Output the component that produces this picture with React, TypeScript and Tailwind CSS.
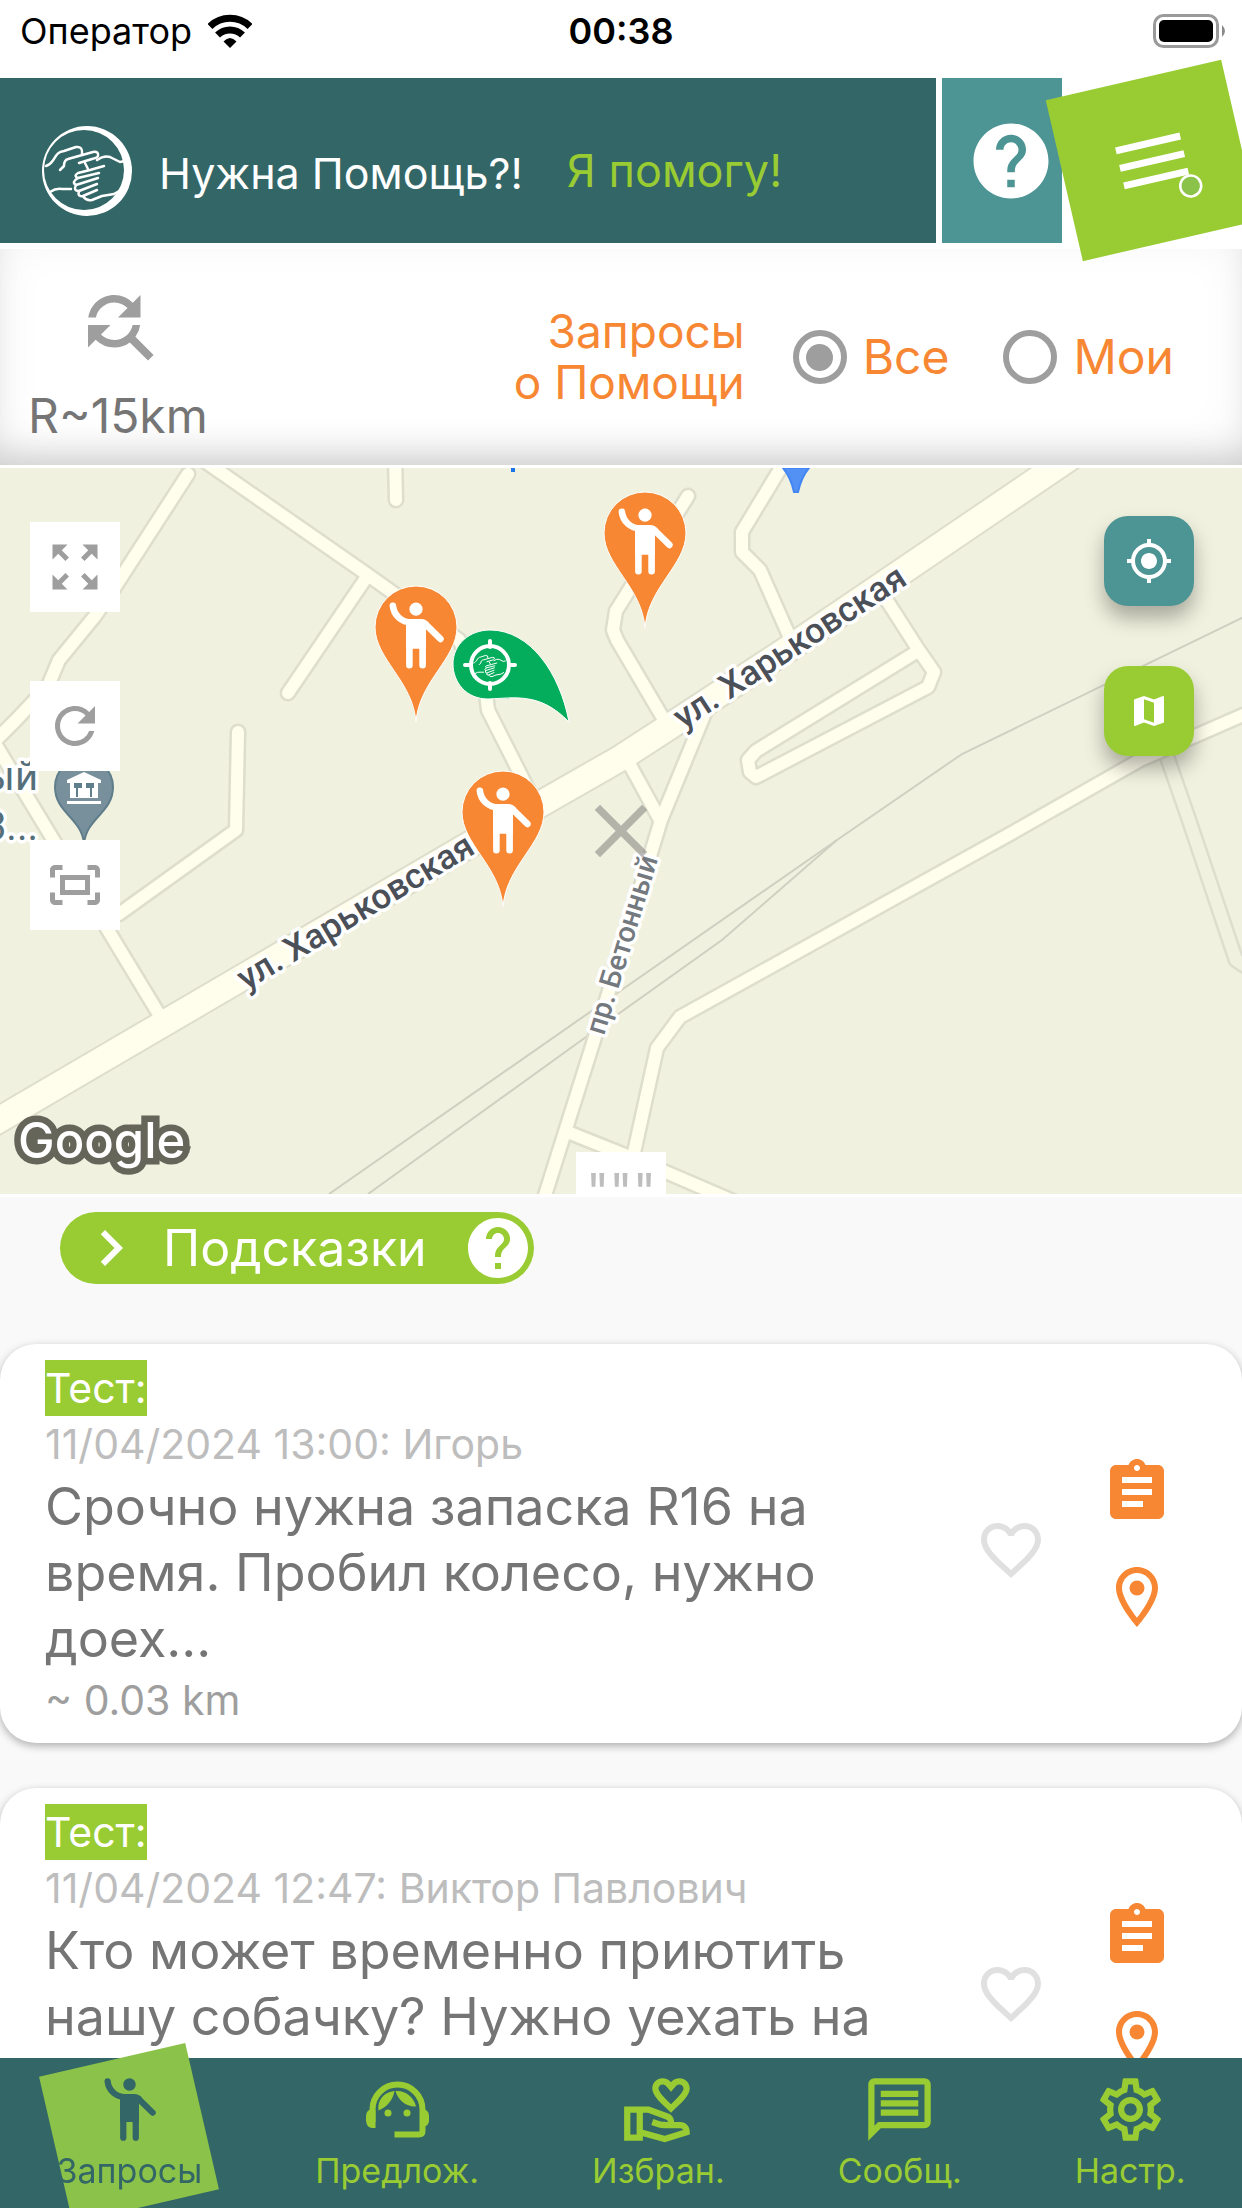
import { useState } from "react";
import type { ReactNode } from "react";
import {
  MdAssignment,
  MdChevronRight,
  MdClose,
  MdFavoriteBorder,
  MdFindReplace,
  MdHelp,
  MdMap,
  MdMyLocation,
  MdOutlineFitScreen,
  MdOutlineLocationOn,
  MdOutlineMessage,
  MdOutlineSettings,
  MdOutlineVolunteerActivism,
  MdRefresh,
  MdZoomOutMap,
} from "react-icons/md";

const minorRoads = [
  "M188 6L113 122L95 148L59 192L48 218L16 252L-6 274L160 548",
  "M200 -10L368 107L459 172L486 225L488 242L535 335",
  "M366 110L288 225",
  "M395 -12L396 32",
  "M238 264L236 362L119 446L100 452",
  "M688 28L616 143L613 162L617 172L670 262",
  "M788 -12L742 64L742 84L760 102L791 172",
  "M884 128L918 181L934 204L928 219L756 309L750 304L748 292L756 283L918 183",
  "M712 228L661 352L594 572L541 740",
  "M625 288L659 350",
  "M570 665L640 693L740 736",
  "M628 712L657 580L680 549L1010 366L1140 292L1250 244",
];

const mainRoad = "M-20 663L467 378L621 290L661 264L791 179L1084 -20";

type HelpRequest = {
  id: number;
  date: string;
  text: string;
  distance?: string;
};

const requests: HelpRequest[] = [
  {
    id: 1,
    date: "11/04/2024 13:00: Игорь",
    text: "Срочно нужна запаска R16 на время. Пробил колесо, нужно доех...",
    distance: "~ 0.03 km",
  },
  {
    id: 2,
    date: "11/04/2024 12:47: Виктор Павлович",
    text: "Кто может временно приютить нашу собачку? Нужно уехать на",
  },
];

function Person() {
  return (
    <g fill="none" stroke="currentColor" strokeWidth="2" strokeLinecap="round">
      <circle cx="12" cy="4" r="2" fill="currentColor" stroke="none" />
      <path d="M5 3C5.3 5.8 7.6 8 10.6 8" />
      <path
        d="M8.6 7.4L11 7h2.5c1.1 0 1.8.5 2.4 1.1L15 10v6H9V8.7z"
        fill="currentColor"
        stroke="none"
      />
      <path d="M10 9V21M14 9V21M15 8.7L19.4 13" />
    </g>
  );
}

function PersonIcon() {
  return (
    <svg viewBox="0 0 24 24" className="size-[75px]" aria-hidden="true">
      <Person />
    </svg>
  );
}

function Hands() {
  return (
    <g
      fill="none"
      stroke="white"
      strokeWidth="2.500"
      strokeLinecap="round"
      strokeLinejoin="round"
    >
      <path d="M4 40C8 39 9 37 12 33C15 28 16 26 22 25L34 21Q41 20 40 28" />
      <path d="M18 44L22 40Q22 34 26 33L51 26Q57 25 56 30Q55 32 50 33L37 37" />
      <path d="M55 34Q62 29 68 31L78 36L83 35" />
      <path d="M43 37L46 43M62 40L48 44L36 47Q31 50 36 52L57 47" />
      <path d="M36 52Q29 56 34 59L56 52" />
      <path d="M34 59Q31 65 37 65L55 58" />
      <path d="M37 65Q35 71 41 70L55 64" />
      <path d="M41 70Q44 75 50 74L60 70L72 68L79 64" />
      <path d="M8 66Q14 62 20 63L29 63" />
    </g>
  );
}

function Logo() {
  return (
    <svg viewBox="0 0 90 90" className="size-[90px] shrink-0" aria-hidden="true">
      <path
        fill="white"
        fillRule="evenodd"
        d="M45 0a45 45 0 1 0 0 90a45 45 0 1 0 0-90zM42 4a40 40 0 1 1 0 80a40 40 0 1 1 0-80z"
      />
      <Hands />
    </svg>
  );
}

function AgentIcon() {
  return (
    <svg
      viewBox="0 0 75 75"
      className="size-[75px]"
      fill="currentColor"
      aria-hidden="true"
    >
      <path
        d="M12.5 50V37.5A25 25 0 0 1 62.5 37.5V59Q62.5 62.5 59 62.5H34.5"
        fill="none"
        stroke="currentColor"
        strokeWidth="6"
      />
      <path d="M9 38H15.500V56H12Q6 55 6 48V45Q6 40 9 38zM66 38H60V54H66Q69 52 69 48V44Q69 40 66 38z" />
      <path d="M34.500 19C24 20 17 28 18.500 38.500C27 35 33 28 34.500 19z" />
      <path d="M35.500 19C45 18 54 25 56 34.500C46 35 38 28 35.500 19z" />
      <circle cx="28" cy="41" r="3.500" />
      <circle cx="47" cy="41" r="3.500" />
    </svg>
  );
}

function StatusBar() {
  return (
    <div className="grid h-[78px] shrink-0 grid-cols-3 items-center px-4 pb-4 text-[36px] leading-[44px] text-black">
      <div className="flex items-center gap-4 pl-1">
        <span>Оператор</span>
        <svg viewBox="0 0 44 34" className="h-[34px] w-11" aria-label="Wi-Fi">
          <g fill="none" stroke="black" strokeWidth="7">
            <path d="M2 12.500A28.500 28.500 0 0 1 42 12.500" />
            <path d="M9.500 21A18 18 0 0 1 34.500 21" />
          </g>
          <path d="M15.500 27.500Q22 20.500 28.500 27.500L22 34z" />
        </svg>
      </div>
      <time className="text-center font-semibold">00:38</time>
      <svg
        viewBox="0 0 73 34"
        className="h-[34px] w-[73px] justify-self-end"
        aria-label="Заряд батареи"
      >
        <rect x="1.500" y="1.500" width="63" height="31" rx="9" fill="none" stroke="#9a9a9a" strokeWidth="3" />
        <rect x="6" y="6" width="54" height="22" rx="5" />
        <path d="M69 11Q75 17 69 23z" fill="#8a8a8a" />
      </svg>
    </div>
  );
}

function Header() {
  return (
    <header className="flex h-[165px] shrink-0">
      <div className="flex flex-1 items-center bg-[#336666] pt-5 pl-[42px]">
        <Logo />
        <h1 className="mt-1 ml-[27px] text-[43px] leading-[50px] text-white">
          Нужна Помощь?!
        </h1>
        <a href="#help" className="ml-11 text-[45px] leading-[50px] text-[#99cc33]">
          Я помогу!
        </a>
      </div>
      <button
        type="button"
        aria-label="Справка"
        className="ml-1.5 flex w-[120px] items-center justify-end bg-[#4d9494] pr-1.5"
      >
        <MdHelp className="size-[90px] text-white" />
      </button>
      <button
        type="button"
        aria-label="Меню"
        className="z-10 flex w-[180px] -rotate-13 items-center justify-center bg-[#99cc33]"
      >
        <svg viewBox="0 0 90 90" className="size-[90px]" aria-hidden="true">
          <path d="M12 27H78M12 45H78M12 63H78" stroke="white" strokeWidth="7" />
          <circle cx="77" cy="78" r="10.500" fill="#8bc34a" stroke="white" strokeWidth="2.500" />
        </svg>
      </button>
    </header>
  );
}

type RadioProps = {
  label: string;
  checked: boolean;
  onChange: () => void;
};

function Radio({ label, checked, onChange }: RadioProps) {
  return (
    <label className="flex items-center gap-4 text-[48px] leading-[60px]">
      <input
        type="radio"
        name="scope"
        checked={checked}
        onChange={onChange}
        className="grid size-[54px] appearance-none place-content-center rounded-full border-6 border-[#9e9e9e] before:size-[27px] before:rounded-full before:bg-[#9e9e9e] before:opacity-0 checked:before:opacity-100"
      />
      {label}
    </label>
  );
}

function Filters() {
  const [scope, setScope] = useState("all");

  return (
    <div className="mt-1.5 flex h-[216px] shrink-0 items-center justify-between pr-[68px] pl-7 shadow-[inset_0_-24px_36px_-18px_rgba(0,0,0,0.18),inset_0_-12px_48px_rgba(0,0,0,0.06)]">
      <button type="button" className="flex flex-col items-center pt-3">
        <MdFindReplace className="size-[90px] text-[#9e9e9e]" />
        <span className="pt-4 text-[48px] leading-[60px] text-[#757575]">
          R~15km
        </span>
      </button>
      <div
        role="radiogroup"
        aria-labelledby="scope-label"
        className="flex items-center text-[#f78733]"
      >
        <p id="scope-label" className="text-right text-[46px] leading-[51px]">
          Запросы
          <br />о Помощи
        </p>
        <div className="ml-12 flex gap-[54px]">
          <Radio label="Все" checked={scope === "all"} onChange={() => setScope("all")} />
          <Radio label="Мои" checked={scope === "my"} onChange={() => setScope("my")} />
        </div>
      </div>
    </div>
  );
}

function RequestPin({ x, y }: { x: number; y: number }) {
  return (
    <g transform={`translate(${x} ${y})`} className="text-white">
      <path
        d="M0 95C-3 54 -41 32 -41 0A41 41 0 0 1 41 0C41 32 3 54 0 95z"
        fill="#f78733"
        stroke="white"
      />
      <g transform="translate(-39.600 -31) scale(3.300)">
        <Person />
      </g>
    </g>
  );
}

function MapCanvas() {
  return (
    <svg
      viewBox="0 0 1242 726"
      preserveAspectRatio="xMidYMid slice"
      className="absolute inset-0 size-full"
      aria-label="Карта"
    >
      <rect width="1242" height="726" fill="#f1f1df" />
      <g fill="none" stroke="#d0d0c2" strokeWidth="2">
        <path d="M1250 146L962 286L837 372L590 544L329 726" />
        <path d="M837 372L722 472L586 569L368 726" />
      </g>
      <g fill="none" strokeLinejoin="round">
        <path d="M1164 280L1189 352L1236 492L1260 508" stroke="#dedece" strokeWidth="17" />
        <path d="M1164 280L1189 352L1236 492L1260 508" stroke="#f1f1df" strokeWidth="12" />
      </g>
      <g fill="none" strokeLinecap="round" strokeLinejoin="round">
        <g stroke="#dedece">
          {minorRoads.map((d) => (
            <path key={d} d={d} strokeWidth="17" />
          ))}
          <path d={mainRoad} strokeWidth="29" />
        </g>
        <g stroke="#fffeec">
          {minorRoads.map((d) => (
            <path key={d} d={d} strokeWidth="12" />
          ))}
          <path d={mainRoad} strokeWidth="25" />
        </g>
      </g>

      <g
        fontFamily="Roboto, sans-serif"
        stroke="white"
        strokeWidth="7"
        strokeLinejoin="round"
        paintOrder="stroke"
      >
        <g fontSize="35" fontWeight="500" fill="#4b5058">
          <text transform="translate(683 262) rotate(-33)">ул. Харьковская</text>
          <text transform="translate(246 523) rotate(-31)">ул. Харьковская</text>
        </g>
        <text
          transform="translate(604 568) rotate(-73)"
          fontSize="29"
          fontWeight="500"
          fill="#73797e"
        >
          пр. Бетонный
        </text>
        <g fontSize="40" fill="#546e7a" textAnchor="end">
          <text x="38" y="322">ый</text>
          <text x="38" y="372">3...</text>
        </g>
      </g>
      <rect x="511" width="4" height="4" fill="#1a73e8" />
      <path d="M783 0H809Q801 10 798 24H794Q791 10 783 0z" fill="#5491f5" stroke="#4285f4" strokeWidth="2" />

      <path
        d="M84 376C82 350 55 345 55 319A29 29 0 0 1 113 319C113 345 86 350 84 376z"
        fill="#78909c"
        stroke="#607d8b"
        strokeWidth="2"
      />
      <path
        d="M84 304L67 312V315H70V330H98V315H101V312zM67 333H101V336H67z"
        fill="white"
      />
      <path d="M74 315H82V320H78V329H76V320H74zM86 315H94V320H92V329H90V320H86z" fill="#607d8b" />

      <path
        d="M488 231C466 231 453 214 453 196C453 176 470 162 490 162C530 162 560 205 569 254C540 224 515 230 488 231z"
        fill="#04ad5c"
        stroke="white"
      />
      <circle cx="490" cy="197" r="19" fill="none" stroke="white" strokeWidth="4" />
      <path
        d="M490 173V179M490 215V221M465 197H471M509 197H515"
        stroke="white"
        strokeWidth="4"
        strokeLinecap="round"
      />
      <g transform="translate(472 179) scale(0.400)">
        <Hands />
      </g>

      <RequestPin x={645} y={65} />
      <RequestPin x={416} y={159} />
      <RequestPin x={503} y={344} />

      <text
        x="18"
        y="690"
        fontFamily="Inter, sans-serif"
        fontSize="49"
        fontWeight="500"
        fill="white"
        stroke="#66655a"
        strokeWidth="13"
        paintOrder="stroke"
      >
        Google
      </text>
    </svg>
  );
}

function SquareButton({ label, children }: { label: string; children: ReactNode }) {
  return (
    <button
      type="button"
      aria-label={label}
      className="flex size-[90px] items-center justify-center bg-white text-[60px] text-[#9e9e9e]"
    >
      {children}
    </button>
  );
}

function MapPanel() {
  return (
    <section className="relative my-[3px] h-[726px] shrink-0 overflow-hidden">
      <MapCanvas />
      <div className="absolute top-[54px] left-[30px] flex flex-col gap-[69px]">
        <SquareButton label="Развернуть">
          <MdZoomOutMap />
        </SquareButton>
        <SquareButton label="Обновить">
          <MdRefresh />
        </SquareButton>
        <SquareButton label="Вписать">
          <MdOutlineFitScreen />
        </SquareButton>
      </div>
      <MdClose className="absolute inset-0 m-auto size-[90px] text-[#757575]/50" />
      <div className="absolute top-12 right-12 flex flex-col gap-[60px] text-white">
        <button
          type="button"
          aria-label="Моё местоположение"
          className="flex size-[90px] items-center justify-center rounded-3xl bg-[#4d9494] shadow-[0_12px_20px_rgba(0,0,0,0.3)]"
        >
          <MdMyLocation className="size-12" />
        </button>
        <button
          type="button"
          aria-label="Тип карты"
          className="flex size-[90px] items-center justify-center rounded-3xl bg-[#99cc33] shadow-[0_12px_20px_rgba(0,0,0,0.3)]"
        >
          <MdMap className="size-10" />
        </button>
      </div>
      <button
        type="button"
        aria-label="Изменить высоту карты"
        className="absolute bottom-0 left-1/2 h-[42px] w-[90px] -translate-x-1/2 bg-white pt-4 text-[50px] leading-[48px] text-[#bdbdbd]"
      >
        """
      </button>
    </section>
  );
}

function RequestCard({ request }: { request: HelpRequest }) {
  return (
    <article className="flex min-h-[399px] items-center justify-between rounded-[36px] bg-white pt-4 pr-[69px] pb-[15px] pl-[45px] shadow-[0_3px_8px_rgba(0,0,0,0.3)]">
      <div className="w-[840px] self-start text-[41px] leading-[56px]">
        <span className="inline-block bg-[#99cc33] text-white">Тест:</span>
        <p className="text-[#bdbdbd]">{request.date}</p>
        <h2 className="mt-0.5 text-[52px] leading-[66px] text-[#757575]">
          {request.text}
        </h2>
        {request.distance && <p className="text-[#9e9e9e]">{request.distance}</p>}
      </div>
      <div className="flex items-center gap-[54px] text-[72px]">
        <button type="button" aria-label="В избранное" className="pt-3 text-[#e0e0e0]">
          <MdFavoriteBorder />
        </button>
        <div className="flex flex-col gap-[33px] text-[#f78733]">
          <button type="button" aria-label="Подробнее">
            <MdAssignment />
          </button>
          <button type="button" aria-label="Показать на карте">
            <MdOutlineLocationOn />
          </button>
        </div>
      </div>
    </article>
  );
}

function RequestList() {
  return (
    <main className="min-h-0 flex-1 overflow-y-auto bg-[#f9f9f9] pt-[15px] [scrollbar-width:none]">
      <button
        type="button"
        className="ml-[60px] flex h-[72px] w-[474px] items-center rounded-full bg-[#99cc33] pl-[15px] text-[50px] text-white"
      >
        <MdChevronRight className="size-[72px]" />
        <span className="ml-4">Подсказки</span>
        <MdHelp className="ml-auto size-[72px]" />
      </button>
      <div className="mt-[60px] flex flex-col gap-[45px]">
        {requests.map((request) => (
          <RequestCard key={request.id} request={request} />
        ))}
      </div>
    </main>
  );
}

function NavItem({
  label,
  icon,
  active = false,
}: {
  label: string;
  icon: ReactNode;
  active?: boolean;
}) {
  return (
    <a
      href="#"
      aria-current={active ? "page" : undefined}
      className={
        active
          ? "relative flex flex-col items-center justify-center text-[#336666]"
          : "relative flex flex-col items-center justify-center text-[#99cc33]"
      }
    >
      {active && (
        <span className="absolute left-1/2 size-[150px] -translate-x-1/2 -rotate-13 bg-[#8bc34a]" />
      )}
      <span className="relative text-[75px]">{icon}</span>
      <span className="relative text-[34px] leading-[48px]">{label}</span>
    </a>
  );
}

function BottomNav() {
  return (
    <nav className="z-10 flex h-[150px] shrink-0 justify-around bg-[#336666]">
      <NavItem label="Запросы" icon={<PersonIcon />} active />
      <NavItem label="Предлож." icon={<AgentIcon />} />
      <NavItem label="Избран." icon={<MdOutlineVolunteerActivism />} />
      <NavItem label="Сообщ." icon={<MdOutlineMessage />} />
      <NavItem label="Настр." icon={<MdOutlineSettings />} />
    </nav>
  );
}

export default function App() {
  return (
    <div className="flex h-screen flex-col overflow-hidden bg-white font-['Inter',sans-serif]">
      <StatusBar />
      <Header />
      <Filters />
      <MapPanel />
      <RequestList />
      <BottomNav />
    </div>
  );
}
